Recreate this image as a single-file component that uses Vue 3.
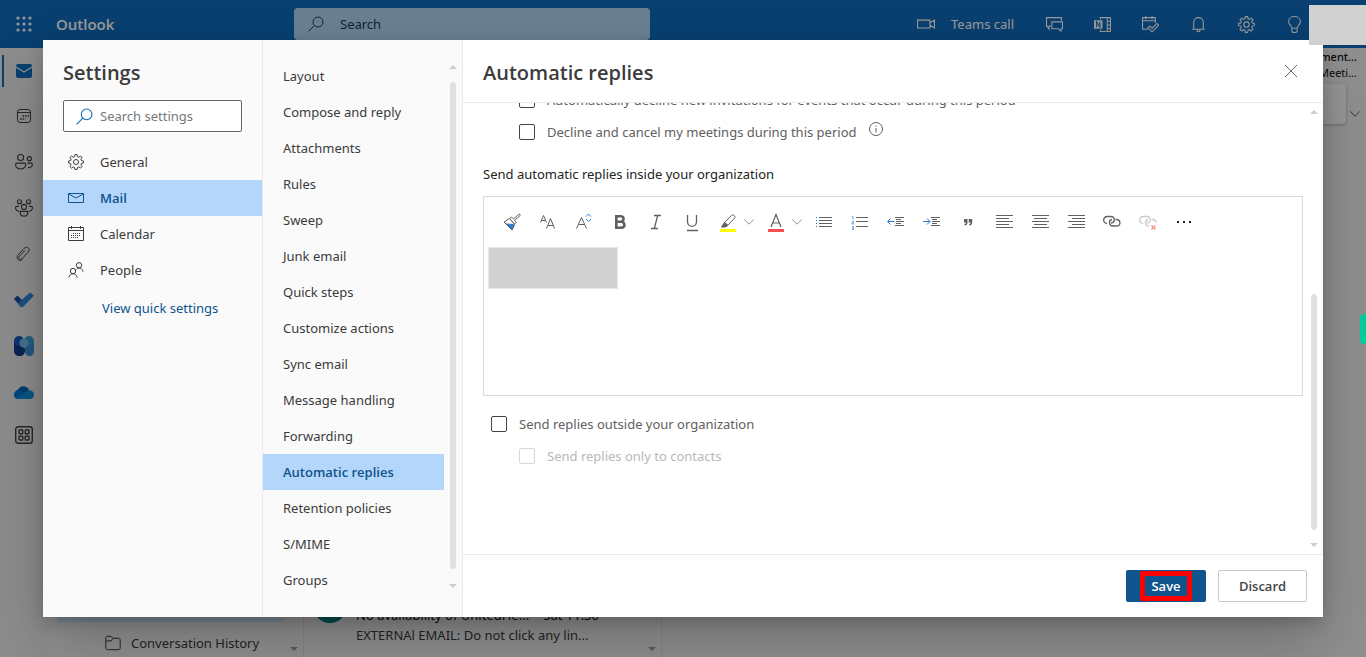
<script setup>
import { ref } from 'vue'

const icons = {
  search: '<circle cx="10" cy="6" r="5"/><path d="M6.4 9.6.6 15.4"/>',
  gear: '<circle cx="8" cy="8" r="2.500"/><path d="M6.900.6h2.200l.4 2 1.300.6L12.500 2l1.600 1.600-1.200 1.700.5 1.300 2 .4v2.100l-2 .4-.5 1.300 1.200 1.700-1.600 1.600-1.700-1.200-1.300.5-.4 2H6.900l-.4-2-1.300-.5-1.700 1.200-1.600-1.600 1.200-1.700-.5-1.300-2-.4V7l2-.4.5-1.300-1.200-1.700L3.500 2l1.700 1.200 1.300-.6z"/>',
  mail: '<path d="M.5 3.500h15v9H.5zM.7 4 8 8l7.300-4"/>',
  calendar: '<path d="M.5 1.500h15v13H.5zM.5 4.500h15M3.500 0v3M12.500 0v3"/><path d="M5 7.500h8M3 9.500h10M3 11.500h8" stroke-dasharray="1 1"/>',
  people: '<circle cx="5" cy="9" r="2.700"/><path d="M1 15.500c0-5 8-5 8 0"/><circle cx="11" cy="3.300" r="2.700"/><path d="M8.500 7.200c2.500-2.400 6-.8 6.500 2.600"/>',
  close: '<path d="m2 2 12 12M14 2 2 14"/>',
  chevron: '<path d="m2.500 5 5.500 5.500L13.500 5"/>',
  info: '<circle cx="8" cy="8" r="6.500"/><path d="M8 7v4.500M8 4.500v1.200"/>',
  folder: '<path d="M.8 13V3c0-1 .6-1.700 1.700-1.700H6l2 2h5.500c1 0 1.700.7 1.700 1.700v8c0 1-.7 1.700-1.700 1.700h-11C1.500 14.700.8 14 .8 13zM.8 6H6l2-2.500"/>',
  video: '<path d="M.5 4.500h11v7H.5zM11.500 7l4-2.500v7l-4-2.500"/>',
  chat: '<path d="M4.500 9.500H2.800v2.700L.9 9.500H.5v-8h14v3"/><path d="M5.500 5.500h10v6.500h-1.300v2.300L11.500 12h-6z"/>',
  onenote: '<path d="M6 3V1.500h9.500v13H6V13M12.500 1.500v13M12.500 5h3M12.500 8.500h3M12.500 12h3"/><path d="M0 4h8v8H0z" fill="currentColor" stroke="none"/><path class="knock" d="M2.500 10.500v-5l3 5v-5"/>',
  planner: '<path d="M5.500 12.500H.5v-11h12v5M.5 4.500h12M3.500 0v3M9.500 0v3"/><path d="m5.500 11 2-1.500 2 2 4.500-4.500 1.700 1.700-6.200 6.200z"/>',
  bell: '<path d="M2 12.500h12M3.500 12.500V6c0-6 9-6 9 0v6.500M6.500 13c0 2.500 3 2.500 3 0"/>',
  bulb: '<path d="M5.500 11.500c0-2.500-3-3-3-6.300 0-6.200 11-6.200 11 0 0 3.300-3 3.800-3 6.300zM5.500 11.500V14c0 2 5 2 5 0v-2.500"/>',
  railCalendar: '<rect x="1.500" y="1.500" width="13" height="13" rx="2.500"/><path d="M1.500 4.500h13"/><path d="M6.500 8h6.500M4 11h5.500" stroke-width="1.600" stroke-dasharray="1.600 1"/>',
  railPeople: '<circle cx="5" cy="4" r="2.700"/><path d="M.5 10.300c0-1 .5-1.300 1.300-1.300h6.400c.8 0 1.300.3 1.300 1.300 0 5.200-9 5.200-9 0z"/><circle cx="12.800" cy="5" r="1.800"/><path d="M11 9h3.500c1.500 0 1.500 4.500-3 4"/>',
  railGroup: '<circle cx="4" cy="2.500" r="1.800"/><circle cx="12" cy="2.500" r="1.800"/><circle cx="8" cy="7" r="2.200"/><path d="M3.500 6.500h-2C-.3 6.500.3 11 3.500 10.800M12.500 6.500h2c1.800 0 1.200 4.500-2 4.300M4.500 11h7c0 5.600-7 5.600-7 0z"/>',
  clip: '<path d="m2 9 6-6.500c3-3.200 7 .4 4.300 3.500l-6 6.500c-2 2.200-4.800-.2-2.800-2.300L9 4.400M2 9c-1.600 2-.6 5.500 2 5.300 1.200 0 2-.8 3-1.800"/>',
  apps: '<rect x=".7" y=".7" width="16.600" height="16.600" rx="2.500"/><rect x="4" y="4" width="3.800" height="3.800" rx=".6"/><rect x="10.200" y="4" width="3.800" height="3.800" rx=".6"/><rect x="4" y="10.200" width="3.800" height="3.800" rx=".6"/><rect x="10.200" y="10.200" width="3.800" height="3.800" rx=".6"/>',
}

const tools = [
  { name: 'Format painter', art: '<path d="M1 9 6.500 5.500l5 5.500L9 16.500z" fill="#fff"/><path d="M3.500 11 10.500 11.500 9 16.300z" fill="#2b7cd3" stroke="#2b7cd3"/><path d="M1 9 9 17l2.500-5" /><path d="m6.500 5.500 5 5.500 1.700-1.700-1.700-2L17 2.700C17.800 1.500 16.500.5 15.500 1.500L10.500 6 8.500 4z" fill="#fff"/>' },
  { name: 'Font', art: '<path d="M1.500 9.500 4.500 2.500l3 7M2.500 7.500h4M7.500 15.500l4-10 4 10M9 12.500h5"/>' },
  { name: 'Font size', art: '<path d="M1.500 15.500 6.500 4.500l5 11M3.500 11.500h6"/><path class="blue" d="m11 3.500 2.500-2.500L16 3.500M11 6l2.500 2.500L16 6"/>' },
  { name: 'Bold', art: '<path stroke-width="2.600" d="M5.300 3.300h4c4.300 0 4.300 5.400 0 5.400h-4zM5.300 8.700h4.800c4.400 0 4.400 6-.1 6H5.300z"/>' },
  { name: 'Italic', art: '<path stroke-width="1.300" d="M7 2.500h7M4 15.500h7M10.700 2.500l-3.400 13"/>' },
  { name: 'Underline', art: '<path stroke-width="1.300" d="M4.500 2v6.500c0 6.500 9 6.500 9 0V2M4 17.500h11"/>' },
  { name: 'Highlight', menu: true, art: '<path class="yellow" d="M1 17.500h16"/><path d="m5.500 9.500 7-7c1.600-1.700 4.500.8 3 2.700l-6.700 7z"/><path d="m2.500 14 3-4.500 3.300 3-2.800 1.500z" fill="currentColor"/>' },
  { name: 'Font color', menu: true, art: '<path stroke-width="1.200" d="M4 14 9 1.500 14 14M5.700 10h6.600"/><path class="red" d="M1 17.500h16"/>' },
  { name: 'Bullets', art: '<path d="M4 4.500h13M4 7.500h13M4 10.500h13M4 13.500h13"/><path class="blue" d="M1 4.500h1M1 7.500h1M1 10.500h1M1 13.500h1"/>' },
  { name: 'Numbering', art: '<path d="M5 4.500h12M5 8.500h12M5 13.500h12"/><path class="blue" opacity=".65" d="M1 3.500h1v3M1 8.500h1.500v1.500H1v1h2M1 13.500h1.500v3H1M1 15h1"/>' },
  { name: 'Decrease indent', art: '<path d="M8 4.500h9M9 6.500h5M9 8.500h8M9 10.500h5M8 12.500h9"/><path class="blue" d="M7.500 8.500h-7M3.500 5.500l-3 3 3 3"/>' },
  { name: 'Increase indent', art: '<path d="M8 4.500h9M9 6.500h5M9 8.500h8M9 10.500h5M8 12.500h9"/><path class="blue" d="M0 8.500h7M4 5.500l3 3-3 3"/>' },
  { name: 'Quote', art: '<path fill="currentColor" stroke="none" d="M5 6h3.500v3.500c0 2-1 3-3 3V11c1 0 1.300-.5 1.300-1.500H5zM9.700 6h3.500v3.500c0 2-1 3-3 3V11c1 0 1.300-.5 1.300-1.500H9.700z"/>' },
  { name: 'Align left', art: '<path d="M1 2.500h17M1 5.500h13M1 8.500h17M1 11.500h13M1 14.500h17"/>' },
  { name: 'Align center', art: '<path d="M1 2.500h17M3 5.500h13M1 8.500h17M3 11.500h13M1 14.500h17"/>' },
  { name: 'Align right', art: '<path d="M1 2.500h17M5 5.500h13M1 8.500h17M5 11.500h13M1 14.500h17"/>' },
  { name: 'Insert link', art: '<path stroke-width="1.300" d="M4 10.500C-1 10 0 3.500 4.500 3.500h3c5 0 5 6 .5 6.500M9 6.500c-3.500.5-3.500 6.500 1 6.500h3.500c4.500 0 4.500-6 .5-6.500h-1.500"/>' },
  { name: 'Remove link', off: true, art: '<path stroke-width="1.300" d="M4 10.500C-1 10 0 3.500 4.500 3.500h3c5 0 5 6 .5 6.500M9 6.500c-3.500.5-3.500 6.500 1 6.500M12.500 6.500H14c2 .2 3 1.500 3 3"/><path class="rose" d="m12.500 12.500 4 4M16.500 12.500l-4 4"/>' },
  { name: 'More options', art: '<path stroke="#222" stroke-width="2" d="M2 9h2M8 9h2M14 9h2"/>' },
]

const headerActions = [
  ['Chat', 'chat'], ['OneNote feed', 'onenote'], ['My Day', 'planner'],
  ['Notifications', 'bell'], ['Settings', 'gear'], ['Tips', 'bulb'],
]
const categories = [['General', 'gear'], ['Mail', 'mail'], ['Calendar', 'calendar'], ['People', 'people']]
const pages = [
  'Layout', 'Compose and reply', 'Attachments', 'Rules', 'Sweep', 'Junk email', 'Quick steps',
  'Customize actions', 'Sync email', 'Message handling', 'Forwarding', 'Automatic replies',
  'Retention policies', 'S/MIME', 'Groups',
]
const category = ref('Mail')
const page = ref('Automatic replies')
</script>

<template>
  <div class="app">
    <header class="topbar">
      <button class="waffle" aria-label="App launcher">
        <svg viewBox="0 0 16 16" width="16" height="16">
          <g v-for="r in 3" :key="r"><circle v-for="c in 3" :key="c" class="dot" :cx="c * 6 - 4" :cy="r * 6 - 4" r="1.600" /></g>
        </svg>
      </button>
      <span class="brand">Outlook</span>
      <label class="topsearch">
        <svg class="ico" viewBox="0 0 16 16" width="16" height="16" v-html="icons.search" />
        <input type="text" placeholder="Search" aria-label="Search">
      </label>
      <div class="actions">
        <button class="teams">
          <svg class="ico" viewBox="0 0 16 16" width="18" height="18" v-html="icons.video" />
          Teams call
        </button>
        <button v-for="a in headerActions" :key="a[0]" class="action" :aria-label="a[0]">
          <svg class="ico" viewBox="0 0 16 16" width="17" height="17" v-html="icons[a[1]]" />
        </button>
      </div>
    </header>

    <div class="workspace">
      <nav class="rail" aria-label="Apps">
        <a href="#" class="current" aria-label="Mail">
          <svg viewBox="0 0 16 14" width="16" height="14"><rect width="16" height="14" rx="2" fill="#0f6cbd" /><path d="m0 3 8 5 8-5" fill="none" stroke="#f0f0f0" stroke-width="1.200" /></svg>
        </a>
        <a href="#" aria-label="Calendar"><svg class="ico" viewBox="0 0 16 16" width="16" height="16" v-html="icons.railCalendar" /></a>
        <a href="#" aria-label="People"><svg class="ico" viewBox="0 0 16 16" width="18" height="18" v-html="icons.railPeople" /></a>
        <a href="#" aria-label="Groups"><svg class="ico" viewBox="0 0 16 16" width="18" height="18" v-html="icons.railGroup" /></a>
        <a href="#" aria-label="Files"><svg class="ico" viewBox="0 0 16 16" width="16" height="16" v-html="icons.clip" /></a>
        <a href="#" aria-label="To Do">
          <svg viewBox="0 0 20 16" width="20" height="16"><path d="m0 7 3.500-3.500 7 7L7 15z" fill="#174fa5" /><path d="M7 15 3.800 11.500 16 .5 20 3.500 9 15z" fill="#3087d5" /></svg>
        </a>
        <a href="#" aria-label="Viva Engage">
          <svg viewBox="0 0 20 20" width="20" height="20">
            <rect x="10" width="10" height="13" rx="5" fill="#3aa0d8" /><rect width="10" height="13" rx="5" fill="#185abd" />
            <path d="M20 6v9c0 7-9 7-9 0v-3c0-3 9-2 9-6z" fill="#3b8fd4" /><path d="M0 6v9c0 7 11 7 11 0v-2c0-3-11-2-11-7z" fill="#103f91" /><circle cx="10" cy="7" r="4.500" fill="#76b9ec" />
          </svg>
        </a>
        <a href="#" aria-label="OneDrive">
          <svg viewBox="0 0 20 13" width="20" height="13"><path d="M4 4C6-1 13-1 15 4l-5 5z" fill="#0364b8" /><path d="M0 9c0-4 4-6.500 7-4.500l8 5L4 13c-2.500 0-4-2-4-4z" fill="#0078d4" /><path d="M3 12.500 13 5c4-2 7 1 7 4 0 2-1.500 4-4 4H4z" fill="#1490df" /></svg>
        </a>
        <a href="#" class="more" aria-label="More apps"><svg class="ico apps" viewBox="0 0 18 18" width="18" height="18" v-html="icons.apps" /></a>
      </nav>
      <section class="folders">
        <div class="folder picked" />
        <div class="folder">
          <svg class="ico" viewBox="0 0 16 16" width="16" height="16" v-html="icons.folder" />
          <span>Conversation History</span>
        </div>
        <i class="tri down corner" />
      </section>
      <section class="messages">
        <article class="message">
          <div class="avatar" />
          <div class="lines">
            <div class="subject"><span>No availability of UnitedHe...</span><time>Sat 11:30</time></div>
            <div>EXTERNAl EMAIL: Do not click any lin...</div>
          </div>
        </article>
        <i class="tri down corner" />
      </section>
      <section class="reading">
        <div class="event"><b>ment...</b><span>Meeti...</span></div>
        <div class="ribbon">
          <div class="card" />
          <svg class="ico" viewBox="0 0 16 16" width="14" height="14" v-html="icons.chevron" />
        </div>
      </section>
    </div>

    <div class="scrim" />

    <div class="dialog" role="dialog" aria-label="Settings">
      <nav class="categories" aria-label="Categories">
        <h1>Settings</h1>
        <label class="find">
          <svg class="ico" viewBox="0 0 16 16" width="17" height="17" v-html="icons.search" />
          <input type="text" placeholder="Search settings" aria-label="Search settings">
        </label>
        <button v-for="c in categories" :key="c[0]" class="entry" :class="{ active: category === c[0] }" @click="category = c[0]">
          <svg class="ico" viewBox="0 0 16 16" width="16" height="16" v-html="icons[c[1]]" />
          {{ c[0] }}
        </button>
        <a href="#" class="quick">View quick settings</a>
      </nav>

      <nav class="pages" aria-label="Mail settings">
        <div class="pagelist">
          <button v-for="p in pages" :key="p" class="entry" :class="{ active: page === p }" @click="page = p">{{ p }}</button>
        </div>
        <div class="scroll"><i class="tri" /><i class="thumb" /><i class="tri down" /></div>
      </nav>

      <main class="detail">
        <div class="titlebar">
          <h2>Automatic replies</h2>
          <button class="close" aria-label="Close"><svg class="ico" viewBox="0 0 16 16" width="16" height="16" v-html="icons.close" /></button>
        </div>
        <div class="body">
          <div class="form">
            <label class="check nested scrolled"><input type="checkbox"> Automatically decline new invitations for events that occur during this period</label>
            <div class="withinfo">
              <label class="check nested"><input type="checkbox"> Decline and cancel my meetings during this period</label>
              <svg class="ico" viewBox="0 0 16 16" width="16" height="16" v-html="icons.info" />
            </div>
            <p class="caption">Send automatic replies inside your organization</p>
            <div class="editor">
              <div class="tools">
                <button v-for="t in tools" :key="t.name" class="tool" :class="{ wide: t.menu, off: t.off }" :aria-label="t.name">
                  <svg class="ico" viewBox="0 0 18 19" width="18" height="19" v-html="t.art" />
                  <svg v-if="t.menu" class="ico drop" viewBox="0 0 16 16" width="16" height="16" v-html="icons.chevron" />
                </button>
              </div>
              <div class="block" />
            </div>
            <label class="check outer"><input type="checkbox"> Send replies outside your organization</label>
            <label class="check nested disabled"><input type="checkbox" disabled> Send replies only to contacts</label>
          </div>
          <div class="scroll"><i class="tri" /><i class="thumb low" /><i class="tri down" /></div>
        </div>
        <footer class="footer">
          <button class="save"><span class="mark">Save</span></button>
          <button class="discard">Discard</button>
        </footer>
      </main>
    </div>

    <div class="account" />
    <div class="tab" />
  </div>
</template>

<style>
body { margin: 0; }
</style>

<style scoped>
* { box-sizing: border-box; }
.app {
  position: relative;
  display: flex;
  flex-direction: column;
  height: 100vh;
  overflow: hidden;
  background: #f0f0f0;
  color: #3b3b3b;
  font: 13px/20px "Noto Sans", "Open Sans", sans-serif;
}
button, input { font: inherit; color: inherit; margin: 0; }
button { padding: 0; border: 0; background: none; }
.ico { flex: none; fill: none; stroke: currentColor; stroke-width: 1; }
.ico :deep(.blue) { stroke: #2b7cd3; }
.ico :deep(.yellow) { stroke: #ff0; stroke-width: 3; }
.ico :deep(.red) { stroke: #f25050; stroke-width: 3; }
.ico :deep(.rose) { stroke: #f0948c; stroke-width: 1.500; }
.ico :deep(.knock) { stroke: #0f6cbd; }

.topbar { flex: none; display: flex; align-items: center; height: 48px; background: #0f6cbd; color: #fff; }
.waffle { width: 48px; height: 48px; display: grid; place-items: center; }
.dot { fill: #fff; }
.brand { width: 246px; padding-left: 8px; font-family: "Open Sans", sans-serif; font-size: 15px; font-weight: 600; }
.topsearch { display: flex; align-items: center; gap: 16px; width: 356px; height: 32px; padding: 0 14px; border-radius: 4px; background: #b3d7f2; color: #123f66; }
.topsearch input { flex: 1; min-width: 0; border: 0; background: none; outline: 0; padding: 0; }
.topsearch input::placeholder { color: #123f66; opacity: 1; }
.actions { display: flex; align-items: center; margin-left: auto; padding-right: 48px; }
.teams { display: flex; align-items: center; gap: 16px; padding-right: 16px; }
.action { width: 48px; height: 48px; display: grid; place-items: center; }

.workspace { flex: 1; min-height: 0; display: flex; }
.rail { width: 49px; flex: none; padding-right: 1px; background: #ebebeb; color: #424242; }
.rail a { display: grid; place-items: center; height: 46px; color: inherit; }
.rail .current { border-left: 2px solid #0f6cbd; margin-left: 2px; padding-right: 4px; height: 32px; margin-top: 7px; margin-bottom: 6px; }
.rail .more { height: 40px; }
.apps { stroke-width: 1.400; }
.folders, .messages { position: relative; flex: none; display: flex; flex-direction: column; justify-content: flex-end; border-right: 1px solid #e0e0e0; }
.folders { width: 255px; padding-left: 8px; }
.folder { display: flex; align-items: center; gap: 10px; height: 28px; padding-left: 48px; margin-right: 19px; }
.picked { height: 36px; margin-bottom: 7px; border-radius: 4px; background: #cfe4fa; }
.corner { position: absolute; right: 5px; bottom: 6px; }
.messages { width: 358px; }
.message { display: flex; gap: 9px; padding: 0 0 12px 9px; }
.avatar { width: 34px; height: 34px; margin-top: -16px; border-radius: 50%; background: #038387; }
.lines { flex: 1; min-width: 0; }
.subject { display: flex; justify-content: space-between; padding-right: 62px; color: #111; }
.reading { flex: 1; display: flex; flex-direction: column; align-items: flex-end; }
.event { display: flex; flex-direction: column; align-items: flex-end; padding-right: 9px; font-size: 11px; line-height: 16px; padding-top: 1px; color: #111; }
.event b { font-weight: 500; }
.ribbon { display: flex; align-items: flex-end; gap: 2px; padding: 3px 4px 0 0; }
.ribbon .ico { margin-bottom: 3px; }
.card { width: 60px; height: 40px; border-radius: 4px; background: #fafafa; box-shadow: 0 1px 3px #0004; }

.scrim { position: absolute; inset: 0; background: rgba(0, 0, 0, 0.4); }
.dialog {
  position: absolute;
  inset: 40px 43px;
  display: flex;
  background: #fff;
  box-shadow: 0 26px 58px rgba(0, 0, 0, 0.22), 0 5px 14px rgba(0, 0, 0, 0.18);
}
h1, h2 { margin: 0; font-family: "Open Sans", sans-serif; font-size: 20px; line-height: 28px; font-weight: 600; color: #3b3b3b; }
.categories { flex: none; width: 220px; background: #fafafa; border-right: 1px solid #eaeaea; }
h1 { padding: 19px 20px 13px; }
.find { display: flex; align-items: center; gap: 7px; height: 32px; margin: 0 20px 12px; padding-left: 12px; border: 1px solid #666; border-radius: 2px; background: #fff; color: #0f6cbd; }
.find input { flex: 1; min-width: 0; padding: 0; border: 0; outline: 0; color: #333; }
.find input::placeholder { color: #777; opacity: 1; }
.entry { display: flex; align-items: center; gap: 16px; width: 100%; height: 36px; text-align: left; }
.categories .entry { padding-left: 25px; }
.entry.active { background: #b4d6fa; color: #0f548c; font-family: "Open Sans", sans-serif; font-weight: 600; }
.quick { display: inline-block; margin: 10px 0 0 59px; color: #0f548c; text-decoration: none; }
.pages { flex: none; display: flex; width: 200px; background: #fafafa; border-right: 1px solid #eaeaea; }
.pagelist { flex: 1; padding-top: 18px; }
.pagelist .entry { padding-left: 20px; }
.scroll { flex: none; width: 18px; display: flex; flex-direction: column; align-items: center; }
.pages .scroll { padding: 25px 0 29px; }
.tri { flex: none; width: 0; height: 0; border: 4px solid transparent; border-top-width: 0; border-bottom-color: #c8cfd4; }
.tri.down { border-top: 4px solid #c8cfd4; border-bottom-width: 0; }
.tri.corner { border-top-color: #999; }
.thumb { flex: 1; width: 6px; margin: 13px 0 15px; border-radius: 3px; background: #e0e0e0; }
.detail { flex: 1; min-width: 0; display: flex; flex-direction: column; }
.titlebar { flex: none; display: flex; align-items: center; justify-content: space-between; height: 63px; padding: 3px 24px 0 20px; border-bottom: 1px solid #eaeaea; }
.close { width: 16px; height: 20px; color: #666; }
.body { flex: 1; min-height: 0; display: flex; overflow: hidden; color: #606060; }
.form { flex: 1; min-width: 0; padding-left: 20px; }
.check { display: flex; align-items: center; gap: 12px; height: 32px; }
.check input { appearance: none; width: 16px; height: 16px; border: 1px solid #444; border-radius: 2px; background: #fff; }
.nested { padding-left: 36px; }
.scrolled { margin-top: -19px; }
.withinfo { display: flex; gap: 11px; }
.withinfo .ico { margin-top: 5px; }
.caption { margin: 16px 0 12px; color: #222; }
.editor { height: 200px; margin-right: 2px; border: 1px solid #dadada; }
.tools { display: flex; height: 50px; padding-left: 10px; overflow: hidden; }
.tool { flex: none; display: flex; align-items: center; justify-content: center; width: 36px; color: #606060; }
.wide { width: 48px; justify-content: flex-start; gap: 5px; padding-left: 9px; }
.drop { width: 14px; color: #8f6b9c; }
.off { color: #ccc; }
.block { width: 130px; height: 42px; margin-left: 4px; border: 1px solid #e8e8e8; background: #d1d1d1; }
.outer { margin-top: 12px; padding-left: 8px; }
.disabled { color: #b8b8b8; }
.disabled input { border-color: #d8d8d8; }
.body .scroll { padding: 7px 0; }
.thumb.low { margin: 180px 0 13px; }
.footer { flex: none; display: flex; justify-content: flex-end; gap: 12px; height: 63px; padding: 15px 16px; border-top: 1px solid #eaeaea; font-family: "Open Sans", sans-serif; font-weight: 600; }
.footer button { height: 32px; border-radius: 2px; }
.save { width: 80px; background: #0f548c; color: #fff; }
.mark { display: block; width: 52px; height: 30px; margin: 0 auto; border: 5px solid red; }
.discard { width: 89px; border: 1px solid #c8c8c8; color: #444; }
.account { position: absolute; top: 5px; right: 0; width: 57px; height: 40px; background: #d1d1d1; }
.tab { position: absolute; top: 314px; right: 0; width: 6px; height: 30px; border-radius: 4px 0 0 4px; background: #00cc9b; }
</style>
